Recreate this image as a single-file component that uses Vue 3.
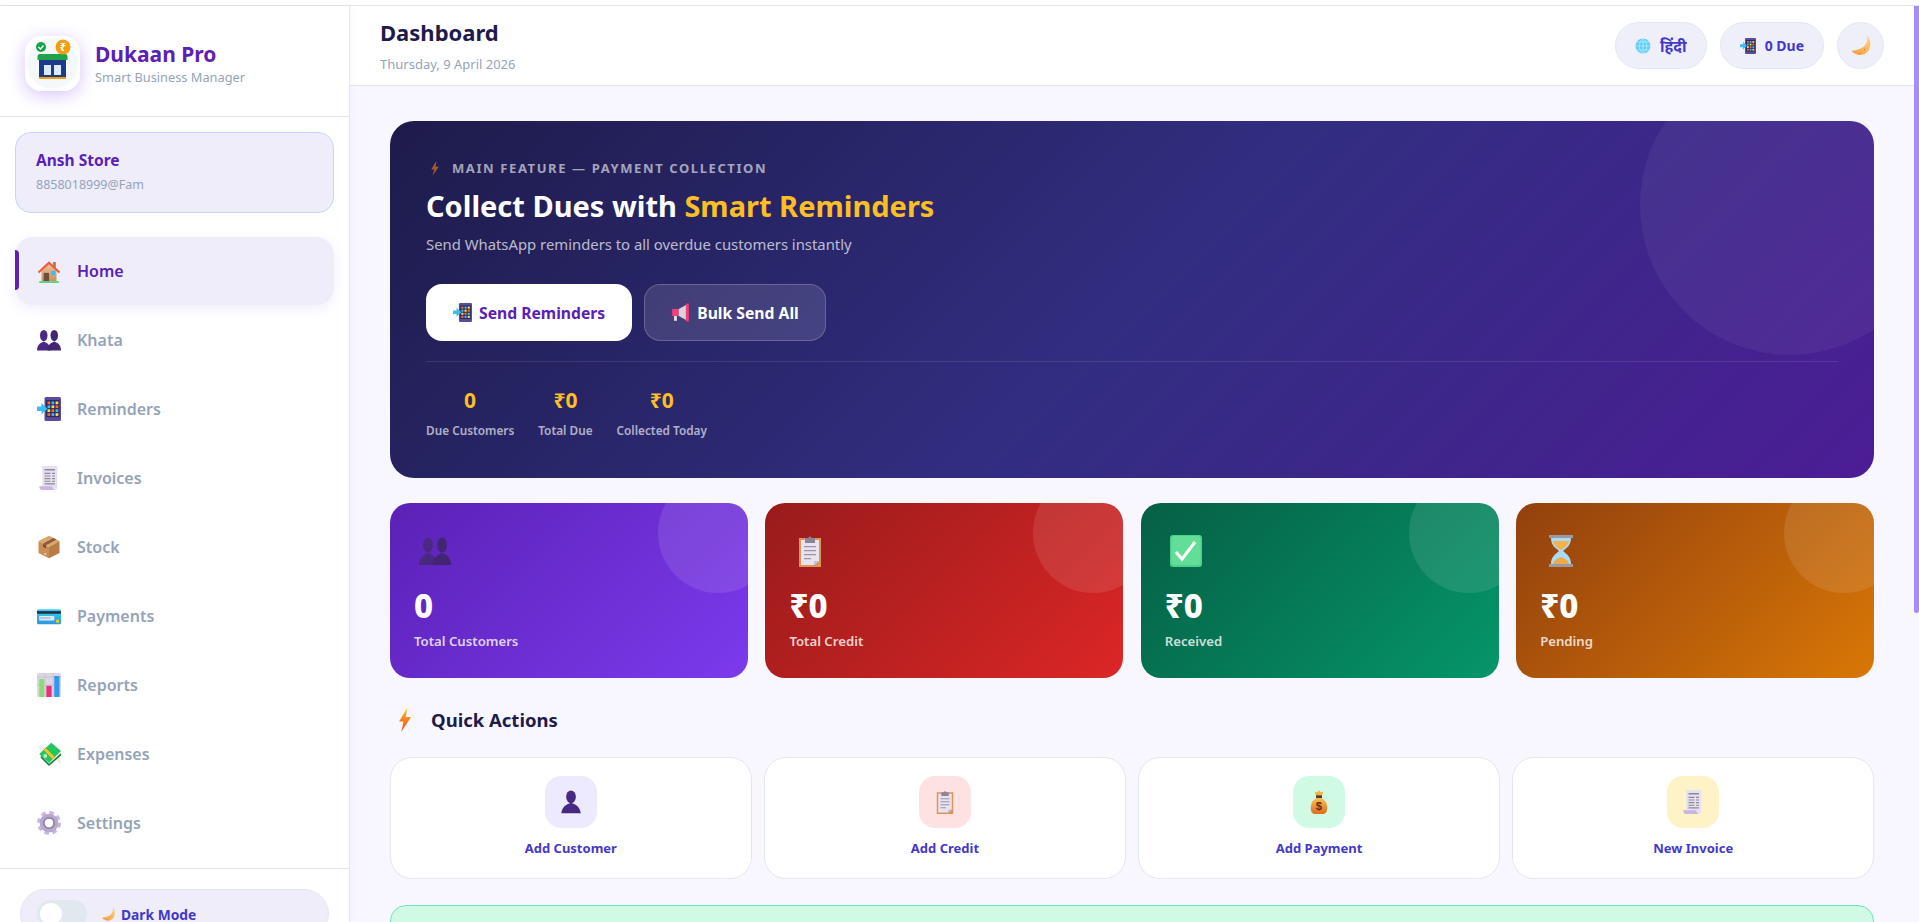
<script setup>
const nav = [
  ['home', 'Home'], ['people', 'Khata'], ['calling', 'Reminders'], ['receipt', 'Invoices'], ['box', 'Stock'],
  ['card', 'Payments'], ['chart', 'Reports'], ['wings', 'Expenses'], ['gear', 'Settings']
]
const heroStats = [['0', 'Due Customers'], ['₹0', 'Total Due'], ['₹0', 'Collected Today']]
const stats = [
  ['people', '0', 'Total Customers', 'purple'],
  ['clip', '₹0', 'Total Credit', 'red'],
  ['check', '₹0', 'Received', 'green'],
  ['hourglass', '₹0', 'Pending', 'amber']
]
const actions = [
  ['person', 'Add Customer', 'a-purple'],
  ['clip', 'Add Credit', 'a-red'],
  ['bag', 'Add Payment', 'a-green'],
  ['receipt', 'New Invoice', 'a-yellow']
]
const dots = ['#f97316', '#38bdf8', '#fde047']
const gridCells = []
for (let r = 0; r < 4; r++) for (let c = 0; c < 3; c++) gridCells.push({ x: 14 + c * 5.4, y: 6 + r * 5.2, f: dots[(r + c) % 3] })
</script>

<template>
  <div class="page">
    <svg class="sprite" aria-hidden="true">
      <defs>
        <linearGradient id="g-wall" x1="0" y1="0" x2="0" y2="1"><stop offset="0" stop-color="#edc49a"/><stop offset="1" stop-color="#c9905f"/></linearGradient>
        <linearGradient id="g-pur" x1="0" y1="0" x2="0" y2="1"><stop offset="0" stop-color="#4b2a86"/><stop offset="1" stop-color="#46287c"/></linearGradient>
        <linearGradient id="g-card" x1="0" y1="0" x2="0" y2="1"><stop offset="0" stop-color="#38d0f5"/><stop offset="1" stop-color="#2f95e0"/></linearGradient>
        <linearGradient id="g-moon" x1="1" y1="0" x2="0" y2="1"><stop offset="0" stop-color="#fcd680"/><stop offset="1" stop-color="#f59a3c"/></linearGradient>
        <linearGradient id="g-bolt" x1="0" y1="0" x2="0" y2="1"><stop offset="0" stop-color="#fbbf24"/><stop offset=".6" stop-color="#f97316"/><stop offset="1" stop-color="#ef5350"/></linearGradient>
        <linearGradient id="g-bag" x1="0" y1="0" x2="0" y2="1"><stop offset="0" stop-color="#fbbf4a"/><stop offset="1" stop-color="#dd6b20"/></linearGradient>
      </defs>
      <symbol id="i-home" viewBox="0 0 32 32">
        <path d="M3 29.5h26V32H3z" fill="#4ade80"/>
        <path d="M6 15 16 6l10 9v14.5H6z" fill="url(#g-wall)"/>
        <path d="M21.5 4h3.5v8h-3.5z" fill="#b96d4a"/>
        <path d="M1 17 16 3l15 14-2 2L16 7 3 19z" fill="#ef5b3d"/>
        <path d="M9 18.5h7v11H9z" fill="#6d4c41"/>
        <path d="M19 16h5.5v5.5H19z" fill="#38bdf8"/>
      </symbol>
      <symbol id="i-people" viewBox="0 0 32 32">
        <ellipse cx="9" cy="10" rx="5" ry="7.500" fill="url(#g-pur)"/>
        <path d="M0 30c0-6 3-10 9-12 6 2 9 6 9 12z" fill="url(#g-pur)"/>
        <ellipse cx="23" cy="10" rx="5" ry="7.500" fill="#432574"/>
        <path d="M14 30c0-6 3-10 9-12 6 2 9 6 9 12z" fill="#432574"/>
      </symbol>
      <symbol id="i-person" viewBox="0 0 32 32">
        <ellipse cx="16" cy="9" rx="6.500" ry="8.500" fill="url(#g-pur)"/>
        <path d="M3 31c1-8 6-12 13-14 7 2 12 6 13 14z" fill="url(#g-pur)"/>
      </symbol>
      <symbol id="i-calling" viewBox="0 0 32 32">
        <rect x="10" y="0" width="22" height="32" rx="2" fill="#5d4a9c"/>
        <rect x="12" y="4" width="18" height="23" fill="#2f2a63"/>
        <rect v-for="(g, i) in gridCells" :key="i" :x="g.x" :y="g.y" width="3.600" height="3.600" :fill="g.f"/>
        <path d="M0 12.500h6V8l8 7.500-8 7.500v-4.500H0z" fill="#38bdf8"/>
      </symbol>
      <symbol id="i-receipt" viewBox="0 0 32 32">
        <path d="M7 0h20v28q0 4-4 4H7z" fill="#e6e0ef"/>
        <path d="M3 27h17q1 4 4 5H7q-4 0-4-5z" fill="#c9b6e0"/>
        <path d="M10 4h14v2H10zM10 9h8v1.500h-8zM20 9h4v1.500h-4zM10 12.500h8V14h-8zM20 12.500h4V14h-4zM10 16h8v1.500h-8zM20 16h4v1.500h-4zM10 19.500h8V21h-8zM20 19.500h4V21h-4zM10 23h14v1.500H10z" fill="#8f879c"/>
      </symbol>
      <symbol id="i-box" viewBox="0 0 32 32">
        <path d="M16 1 30 8 16 16 2 8z" fill="#dca56c"/>
        <path d="M2 8l14 8v15L2 24z" fill="#c98d55"/>
        <path d="M30 8 16 16v15l14-7z" fill="#b97c45"/>
        <path d="M8 11.500 22 4l4 2-14 7.500z" fill="#8a5a3c"/>
        <path d="M8 11.500l4 2V18l-4-2.200z" fill="#7a4e34"/>
        <circle cx="11" cy="25" r="1.500" fill="#e4cdb5"/>
      </symbol>
      <symbol id="i-card" viewBox="0 0 32 32">
        <rect x="0" y="7" width="32" height="20" rx="2" fill="url(#g-card)"/>
        <rect x="0" y="9.500" width="32" height="3.500" fill="#27303f"/>
        <rect x="3" y="16" width="20" height="6" fill="#dbeafe"/>
        <rect x="4" y="18" width="14" height="1.300" fill="#94a3b8"/>
        <rect x="25.500" y="21" width="4" height="4" fill="#facc15"/>
      </symbol>
      <symbol id="i-chart" viewBox="0 0 32 32">
        <rect width="32" height="32" rx="3" fill="#dcd6e4"/>
        <path d="M10.500 0v32M21.500 0v32M0 5.500h32M0 16h32" stroke="#c6bed2" stroke-width="1"/>
        <rect x="3" y="8" width="6.500" height="24" fill="#86e06a"/>
        <rect x="12.500" y="17" width="7" height="15" fill="#ec2d78"/>
        <rect x="23" y="4" width="7" height="28" fill="#2f9bf0"/>
      </symbol>
      <symbol id="i-wings" viewBox="0 0 32 32">
        <path d="M0 5l13 2-5 7zM32 30l-2-13-7 5z" fill="#efeae2"/>
        <path d="M3 16 19 1l13 11-16 16z" fill="#22c55e"/>
        <path d="M5 18l11 11 16-14v3L16 32 5 21z" fill="#15803d"/>
        <path d="M9 11l12 12 3-2.800-12-12z" fill="#fbbf24"/>
        <circle cx="11" cy="18.500" r="2.500" fill="#bbf7d0"/>
      </symbol>
      <symbol id="i-gear" viewBox="0 0 32 32">
        <circle cx="16" cy="16" r="12.500" fill="none" stroke="#c7b9dc" stroke-width="7" stroke-dasharray="5.400 4.420"/>
        <circle cx="16" cy="16" r="9" fill="none" stroke="#b8a7d1" stroke-width="7"/>
        <circle cx="16" cy="16" r="7" fill="none" stroke="#8f829e" stroke-width="2"/>
        <circle cx="16" cy="16" r="5.500" fill="#fff"/>
      </symbol>
      <symbol id="i-moon" viewBox="0 0 32 32">
        <path d="M25 1c2 11-4 20-23 22 5 7 17 9 24 1 6-7 4-18-1-23z" fill="url(#g-moon)"/>
        <circle cx="21" cy="21" r="1" fill="#d97706"/><circle cx="14" cy="27" r="1" fill="#d97706"/>
      </symbol>
      <symbol id="i-globe" viewBox="0 0 32 32">
        <circle cx="16" cy="16" r="15" fill="#5fcdfb"/>
        <path d="M1 16h30M4 8h24M4 24h24M16 1v30M16 1c-10 8-10 22 0 30M16 1c10 8 10 22 0 30" fill="none" stroke="#c6eefd" stroke-width="1.400"/>
      </symbol>
      <symbol id="i-bolt" viewBox="0 0 16 32">
        <path d="M11 0 0 18h6L3 32 16 12H9z" fill="url(#g-bolt)"/>
      </symbol>
      <symbol id="i-clip" viewBox="0 0 32 32">
        <rect x="5" y="3" width="22" height="29" fill="#dd9659"/>
        <path d="M7 5h18v21l-5 4H7z" fill="#e8e3ef"/>
        <path d="M20 30v-4h5z" fill="#c9c2d4"/>
        <path d="M10 11h12v1.300H10zM10 15h12v1.300H10zM10 19h12v1.300H10zM10 23h7v1.300h-7z" fill="#9b93a8"/>
        <path d="M11 3h3q2-3 4 0h3v5H11z" fill="#8c8498"/>
      </symbol>
      <symbol id="i-check" viewBox="0 0 32 32">
        <rect width="32" height="32" rx="3" fill="#4fd08a"/>
        <rect x="1.500" y="1" width="29" height="29" rx="3" fill="#63de99"/>
        <path d="M6 17l6 7L25 7" fill="none" stroke="#fff" stroke-width="3"/>
      </symbol>
      <symbol id="i-hourglass" viewBox="0 0 32 32">
        <path d="M6 3h20c0 8-5 10-8 13 3 3 8 5 8 13H6c0-8 5-10 8-13-3-3-8-5-8-13z" fill="#a7dcf7"/>
        <path d="M8 6h16c-1 5-5 7-8 9-3-2-7-4-8-9z" fill="#f5b14f"/>
        <path d="M8 29c1-4 5-6 8-7 3 1 7 3 8 7z" fill="#f0a848"/>
        <path d="M4 0h24v3H4zM4 29h24v3H4z" fill="#9a9aa2"/>
      </symbol>
      <symbol id="i-bag" viewBox="0 0 32 32">
        <path d="M16 0l2 3 4-1-2 5h-8l-2-5 4 1z" fill="#f2b43c"/>
        <rect x="12" y="7" width="8" height="4" fill="#5b3a29"/>
        <path d="M12 11h8c5 3 7 8 7 13 0 6-3 8-6 8H11c-3 0-6-2-6-8 0-5 2-10 7-13z" fill="url(#g-bag)"/>
      </symbol>
      <symbol id="i-mega" viewBox="0 0 32 32">
        <path d="M2 10h11v12H2z" fill="#f43f7a"/>
        <path d="M13 10 26 3v26l-13-7z" fill="#d8d3dc"/>
        <path d="M25 1h5v30h-5z" fill="#f43f7a"/>
        <path d="M5 22h5v8H5z" fill="#e2dde6"/>
      </symbol>
    </svg>

    <div class="strip"></div>
    <div class="shell">
      <aside class="sidebar">
        <div class="brand">
          <div class="logo">
            <svg class="logo-art" viewBox="0 0 55 55">
              <circle cx="27.500" cy="27.500" r="25.500" fill="#f5f8fb"/>
              <rect x="14" y="22" width="27" height="21" fill="#1e3a8a"/>
              <rect x="19" y="29" width="7" height="10" fill="#dbeafe"/>
              <rect x="29" y="29" width="7" height="10" fill="#dbeafe"/>
              <rect x="14" y="41" width="27" height="2" fill="#f59e0b"/>
              <path d="M12.500 24v-3.500q0-2.500 2-2.500h26q2 0 2 2.500V24z" fill="#22a34a"/>
              <circle cx="16" cy="11" r="5" fill="#16a34a"/>
              <path d="M13.500 11l2 2 3-3.500" fill="none" stroke="#fff" stroke-width="1.300"/>
              <circle cx="38" cy="11" r="7.500" fill="#f59e0b"/>
              <text x="38" y="15" text-anchor="middle" font-family="Noto Sans, sans-serif" font-size="11" font-weight="700" fill="#fff">₹</text>
            </svg>
          </div>
          <div class="brand-text">
            <div class="brand-name">Dukaan Pro</div>
            <div class="brand-sub">Smart Business Manager</div>
          </div>
        </div>
        <div class="store">
          <div class="store-name">Ansh Store</div>
          <div class="store-id">8858018999@Fam</div>
        </div>
        <nav class="nav">
          <a v-for="(n, i) in nav" :key="n[1]" class="nav-item" :class="{ active: i === 0 }">
            <svg class="nav-ic"><use :href="'#i-' + n[0]"/></svg>
            <span>{{ n[1] }}</span>
          </a>
        </nav>
        <div class="side-foot">
          <div class="dark-pill">
            <div class="toggle"><div class="knob"></div></div>
            <svg class="dark-moon"><use href="#i-moon"/></svg>
            <span>Dark Mode</span>
          </div>
        </div>
      </aside>

      <main class="main">
        <header class="topbar">
          <div>
            <h1 class="page-title">Dashboard</h1>
            <div class="page-date">Thursday, 9 April 2026</div>
          </div>
          <div class="top-actions">
            <button class="pill"><svg class="pill-ic"><use href="#i-globe"/></svg><span class="hi">हिंदी</span></button>
            <button class="pill"><svg class="pill-ic"><use href="#i-calling"/></svg><span>0 Due</span></button>
            <button class="round"><svg class="round-ic"><use href="#i-moon"/></svg></button>
          </div>
        </header>

        <div class="content">
          <section class="hero">
            <div class="hero-circle"></div>
            <div class="eyebrow"><svg class="eyebrow-ic"><use href="#i-bolt"/></svg><span>MAIN FEATURE — PAYMENT COLLECTION</span></div>
            <h2 class="hero-title">Collect Dues with <em>Smart Reminders</em></h2>
            <p class="hero-sub">Send WhatsApp reminders to all overdue customers instantly</p>
            <div class="hero-btns">
              <button class="btn btn-white"><svg class="btn-ic"><use href="#i-calling"/></svg>Send Reminders</button>
              <button class="btn btn-glass"><svg class="btn-ic"><use href="#i-mega"/></svg>Bulk Send All</button>
            </div>
            <div class="hero-stats">
              <div v-for="s in heroStats" :key="s[1]" class="hero-stat">
                <div class="hs-val">{{ s[0] }}</div>
                <div class="hs-lab">{{ s[1] }}</div>
              </div>
            </div>
          </section>

          <section class="stat-grid">
            <div v-for="s in stats" :key="s[2]" class="stat" :class="s[3]">
              <div class="stat-circle"></div>
              <div class="stat-icbox"><svg class="stat-ic"><use :href="'#i-' + s[0]"/></svg></div>
              <div class="stat-val">{{ s[1] }}</div>
              <div class="stat-lab">{{ s[2] }}</div>
            </div>
          </section>

          <h3 class="section-title"><svg class="section-ic"><use href="#i-bolt"/></svg>Quick Actions</h3>

          <section class="action-grid">
            <div v-for="a in actions" :key="a[1]" class="action">
              <div class="action-box" :class="a[2]">
                <svg class="action-ic" viewBox="0 0 32 32">
                  <use :href="'#i-' + a[0]" width="32" height="32"/>
                  <text v-if="a[0] === 'bag'" class="bag-mark" x="16" y="27" text-anchor="middle">$</text>
                </svg>
              </div>
              <div class="action-lab">{{ a[1] }}</div>
            </div>
          </section>

          <div class="banner"></div>
        </div>
      </main>
      <div class="rail"><div class="thumb"></div></div>
    </div>
  </div>
</template>

<style>
html, body { margin: 0; height: 100%; overflow: hidden; background: #fff; }
</style>

<style scoped>
.page { width: 1919px; height: 922px; display: flex; flex-direction: column; overflow: hidden; font-family: "Noto Sans", "Open Sans", sans-serif; background: #fff; }
.sprite { position: absolute; width: 0; height: 0; overflow: hidden; }
.strip { height: 5px; flex: none; border-bottom: 1px solid #e2e5ec; background: #fff; }
.shell { flex: 1; min-height: 0; display: flex; }

.sidebar { width: 349px; flex: none; border-right: 1px solid #e2e8f0; background: #fff; overflow: hidden; box-shadow: 2px 0 6px rgba(91, 33, 182, .03); position: relative; z-index: 2; }
.brand { height: 110px; display: flex; align-items: center; gap: 15px; padding-left: 25px; border-bottom: 1px solid #e2e8f0; }
.logo { width: 55px; height: 55px; border-radius: 16px; background: #fff; box-shadow: 0 4px 18px rgba(124, 58, 237, .3); margin-top: 5px; }
.logo-art { display: block; width: 55px; height: 55px; }
.brand-text { margin-top: 4px; }
.brand-name { font-size: 21px; line-height: 28px; font-weight: 700; color: #5b21b6; }
.brand-sub { font-size: 12.800px; line-height: 18px; color: #94a3b8; }
.store { margin: 15px 15px 0; height: 81px; box-sizing: border-box; padding: 14px 20px; border: 1px solid #c7d2fe; border-radius: 16px; background: #efedfa; }
.store-name { font-size: 15.500px; line-height: 26px; font-weight: 700; color: #5b21b6; }
.store-id { font-size: 12.500px; line-height: 24px; color: #94a3b8; }
.nav { margin-top: 24px; padding: 0 15px; display: flex; flex-direction: column; gap: 1px; }
.nav-item { position: relative; height: 68px; display: flex; align-items: center; gap: 16px; padding-left: 22px; border-radius: 18px; font-size: 16px; font-weight: 600; color: #94a3b8; }
.nav-item span { margin-top: -1px; }
.nav-item.active { background: #efedfa; color: #5b21b6; box-shadow: 0 4px 14px rgba(91, 33, 182, .08); }
.nav-item.active::before { content: ""; position: absolute; left: 0; top: 13px; width: 4px; height: 40px; border-radius: 0 4px 4px 0; background: #5b21b6; }
.nav-ic { width: 24px; height: 24px; flex: none; }
.side-foot { margin-top: 11px; border-top: 1px solid #e2e8f0; padding: 20px 20px 0; }
.dark-pill { display: flex; align-items: center; height: 50px; box-sizing: border-box; padding-left: 16px; border: 1px solid #e2e8f0; border-radius: 28px; background: #efedfa; font-size: 13.800px; font-weight: 700; color: #4338ca; }
.toggle { position: relative; width: 50px; height: 28px; border-radius: 14px; background: #e2e8f0; }
.knob { position: absolute; left: 3px; top: 3px; width: 22px; height: 22px; border-radius: 50%; background: #fff; }
.dark-moon { width: 15px; height: 15px; margin: 0 5px 0 14px; }

.main { flex: 1; min-width: 0; height: 916px; overflow: hidden; background: #f8f7ff; }
.rail { width: 5px; flex: none; background: #f8f7ff; }
.thumb { height: 607px; background: #a78bfa; border-radius: 0 0 4px 4px; }
.topbar { height: 79px; display: flex; align-items: center; justify-content: space-between; padding: 0 30px; background: #fff; border-bottom: 1px solid #e2e8f0; }
.page-title { margin: 0; font-size: 22px; line-height: 28px; font-weight: 700; color: #1e1b4b; }
.page-date { margin-top: 9px; font-size: 13px; line-height: 18px; color: #94a3b8; }
.top-actions { display: flex; align-items: center; gap: 13px; }
.pill { height: 47px; display: flex; align-items: center; gap: 9px; padding: 0 19px; border: 1px solid #e2e8f0; border-radius: 24px; background: #efeffa; font-family: inherit; font-size: 14px; font-weight: 700; color: #4338ca; }
.pill .hi { font-size: 15.500px; }
.pill-ic { width: 16px; height: 16px; }
.round { width: 47px; height: 47px; padding: 0; display: flex; align-items: center; justify-content: center; border: 1px solid #e2e8f0; border-radius: 50%; background: #efeffa; }
.round-ic { width: 22px; height: 22px; }

.content { padding: 35px 40px 0; box-sizing: border-box; }
.hero { position: relative; overflow: hidden; height: 357px; box-sizing: border-box; padding: 35px 36px; border-radius: 24px; background: linear-gradient(135deg, #1e1b4b 0%, #312e81 50%, #4c1d95 100%); }
.hero-circle { position: absolute; width: 300px; height: 300px; top: -66px; right: -66px; border-radius: 50%; background: rgba(255, 255, 255, .05); }
.eyebrow { position: relative; height: 24px; display: flex; align-items: center; font-size: 13px; font-weight: 700; letter-spacing: 1.600px; color: rgba(255, 255, 255, .6); }
.eyebrow-ic { width: 8px; height: 15px; margin: 0 13px 0 5px; opacity: .6; }
.hero-title { position: relative; margin: 6px 0 0; font-size: 29px; line-height: 40px; font-weight: 700; color: #fff; }
.hero-title em { font-style: normal; color: #fbbf24; }
.hero-sub { position: relative; margin: 6px 0 0; font-size: 14.850px; line-height: 24px; color: rgba(255, 255, 255, .7); }
.hero-btns { position: relative; margin-top: 28px; display: flex; gap: 12px; padding-bottom: 20px; border-bottom: 1px solid rgba(255, 255, 255, .1); }
.btn { height: 57px; display: flex; align-items: center; gap: 7px; border-radius: 16px; font-family: inherit; font-size: 15.700px; font-weight: 700; box-sizing: border-box; }
.btn-ic { width: 19px; height: 19px; flex: none; }
.btn-white { padding: 0 27px; background: #fff; border: none; color: #5b21b6; }
.btn-glass { padding: 0 26px; background: rgba(255, 255, 255, .12); border: 1px solid rgba(255, 255, 255, .2); color: #fff; }
.hero-stats { position: relative; margin-top: 23px; display: flex; gap: 24px; }
.hero-stat { text-align: center; }
.hs-val { font-size: 21px; line-height: 30px; font-weight: 700; color: #fbbf24; }
.hs-lab { margin-top: 6px; font-size: 11.800px; line-height: 18px; font-weight: 600; color: rgba(255, 255, 255, .65); }

.stat-grid { margin-top: 25px; display: grid; grid-template-columns: repeat(4, 1fr); gap: 17.500px; }
.stat { position: relative; overflow: hidden; height: 175px; box-sizing: border-box; padding: 28px 24px 0; border-radius: 20px; color: #fff; }
.purple { background: linear-gradient(135deg, #5b21b6, #7c3aed); }
.red { background: linear-gradient(135deg, #991b1b, #dc2626); }
.green { background: linear-gradient(135deg, #065f46, #059669); }
.amber { background: linear-gradient(135deg, #92400e, #d97706); }
.stat-circle { position: absolute; width: 120px; height: 120px; top: -30px; right: -30px; border-radius: 50%; background: rgba(255, 255, 255, .1); }
.stat-icbox { width: 42px; height: 40px; display: flex; align-items: center; justify-content: center; }
.stat-ic { width: 32px; height: 32px; }
.stat-val { margin-top: 15px; font-size: 33px; line-height: 40px; font-weight: 800; }
.stat-lab { margin-top: 5px; font-size: 13.200px; line-height: 20px; font-weight: 600; color: rgba(255, 255, 255, .8); }

.section-title { margin: 27px 0 0; height: 30px; display: flex; align-items: center; gap: 20px; padding-left: 9px; font-size: 18.500px; line-height: 30px; font-weight: 700; color: #1e1b4b; }
.section-ic { width: 12px; height: 24px; }

.action-grid { margin-top: 22px; display: grid; grid-template-columns: repeat(4, 1fr); gap: 12.500px; }
.action { height: 122px; box-sizing: border-box; padding-top: 18px; display: flex; flex-direction: column; align-items: center; background: #fff; border: 1px solid #e2e8f0; border-radius: 22px; }
.action-box { width: 52px; height: 52px; display: flex; align-items: center; justify-content: center; border-radius: 16px; }
.action-ic { width: 24px; height: 24px; }
.bag-mark { font-family: "Liberation Sans", sans-serif; font-size: 15px; font-weight: 700; fill: #5b2c20; }
.a-purple { background: #ede9fe; }
.a-red { background: #fee2e2; }
.a-green { background: #d1fae5; }
.a-yellow { background: #fef3c7; }
.action-lab { margin-top: 10px; font-size: 13px; line-height: 20px; font-weight: 700; color: #4338ca; }

.banner { margin-top: 26px; height: 90px; background: #d1fae5; border: 1px solid #6ee7b7; border-radius: 16px; }
</style>
